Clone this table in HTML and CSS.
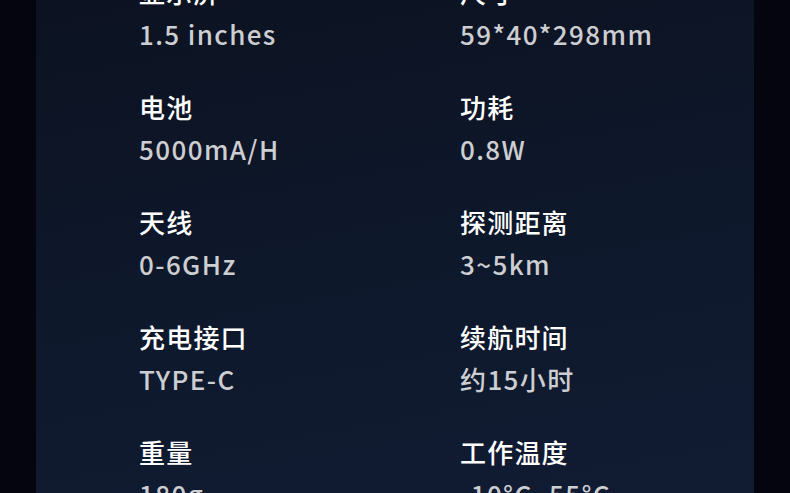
FILE: index.html
```html
<!DOCTYPE html>
<html>
<head>
  <meta name="viewport" content="width=device-width, initial-scale=1">
  <link rel="stylesheet" href="styles.css">
</head>
<body>
  <div class="panel">
    <div class="specs">
      <div class="item"><div class="label">显示屏</div><div class="value">1.5 inches</div></div>
      <div class="item"><div class="label">尺寸</div><div class="value">59*40*298mm</div></div>
      <div class="item"><div class="label">电池</div><div class="value">5000mA/H</div></div>
      <div class="item"><div class="label">功耗</div><div class="value">0.8W</div></div>
      <div class="item"><div class="label">天线</div><div class="value">0-6GHz</div></div>
      <div class="item"><div class="label">探测距离</div><div class="value">3~5km</div></div>
      <div class="item"><div class="label">充电接口</div><div class="value">TYPE-C</div></div>
      <div class="item"><div class="label">续航时间</div><div class="value">约15小时</div></div>
      <div class="item"><div class="label">重量</div><div class="value">180g</div></div>
      <div class="item"><div class="label">工作温度</div><div class="value">-10°C~55°C</div></div>
    </div>
  </div>
</body>
</html>
```

FILE: styles.css
```css
html, body { height: 100%; }
body {
  margin: 0;
  background: #050510;
  font-family: "Noto Sans CJK SC", "Noto Sans", sans-serif;
  overflow: hidden;
}

.panel {
  display: flow-root;
  margin: 0 36px;
  height: 100%;
  background: linear-gradient(170deg, #0c1221 0%, #0e182b 50%, #111c33 100%);
}

.specs {
  display: grid;
  grid-template-columns: 321px 321px;
  row-gap: 31px;
  padding-left: 103px;
  margin-top: -29px;
}

.label {
  color: #ffffff;
  font-size: 26px;
  font-weight: 500;
  line-height: 42px;
  letter-spacing: 1.2px;
}

.value {
  color: #cdced1;
  font-size: 26px;
  font-weight: 500;
  line-height: 42px;
  letter-spacing: 1.4px;
}
```
